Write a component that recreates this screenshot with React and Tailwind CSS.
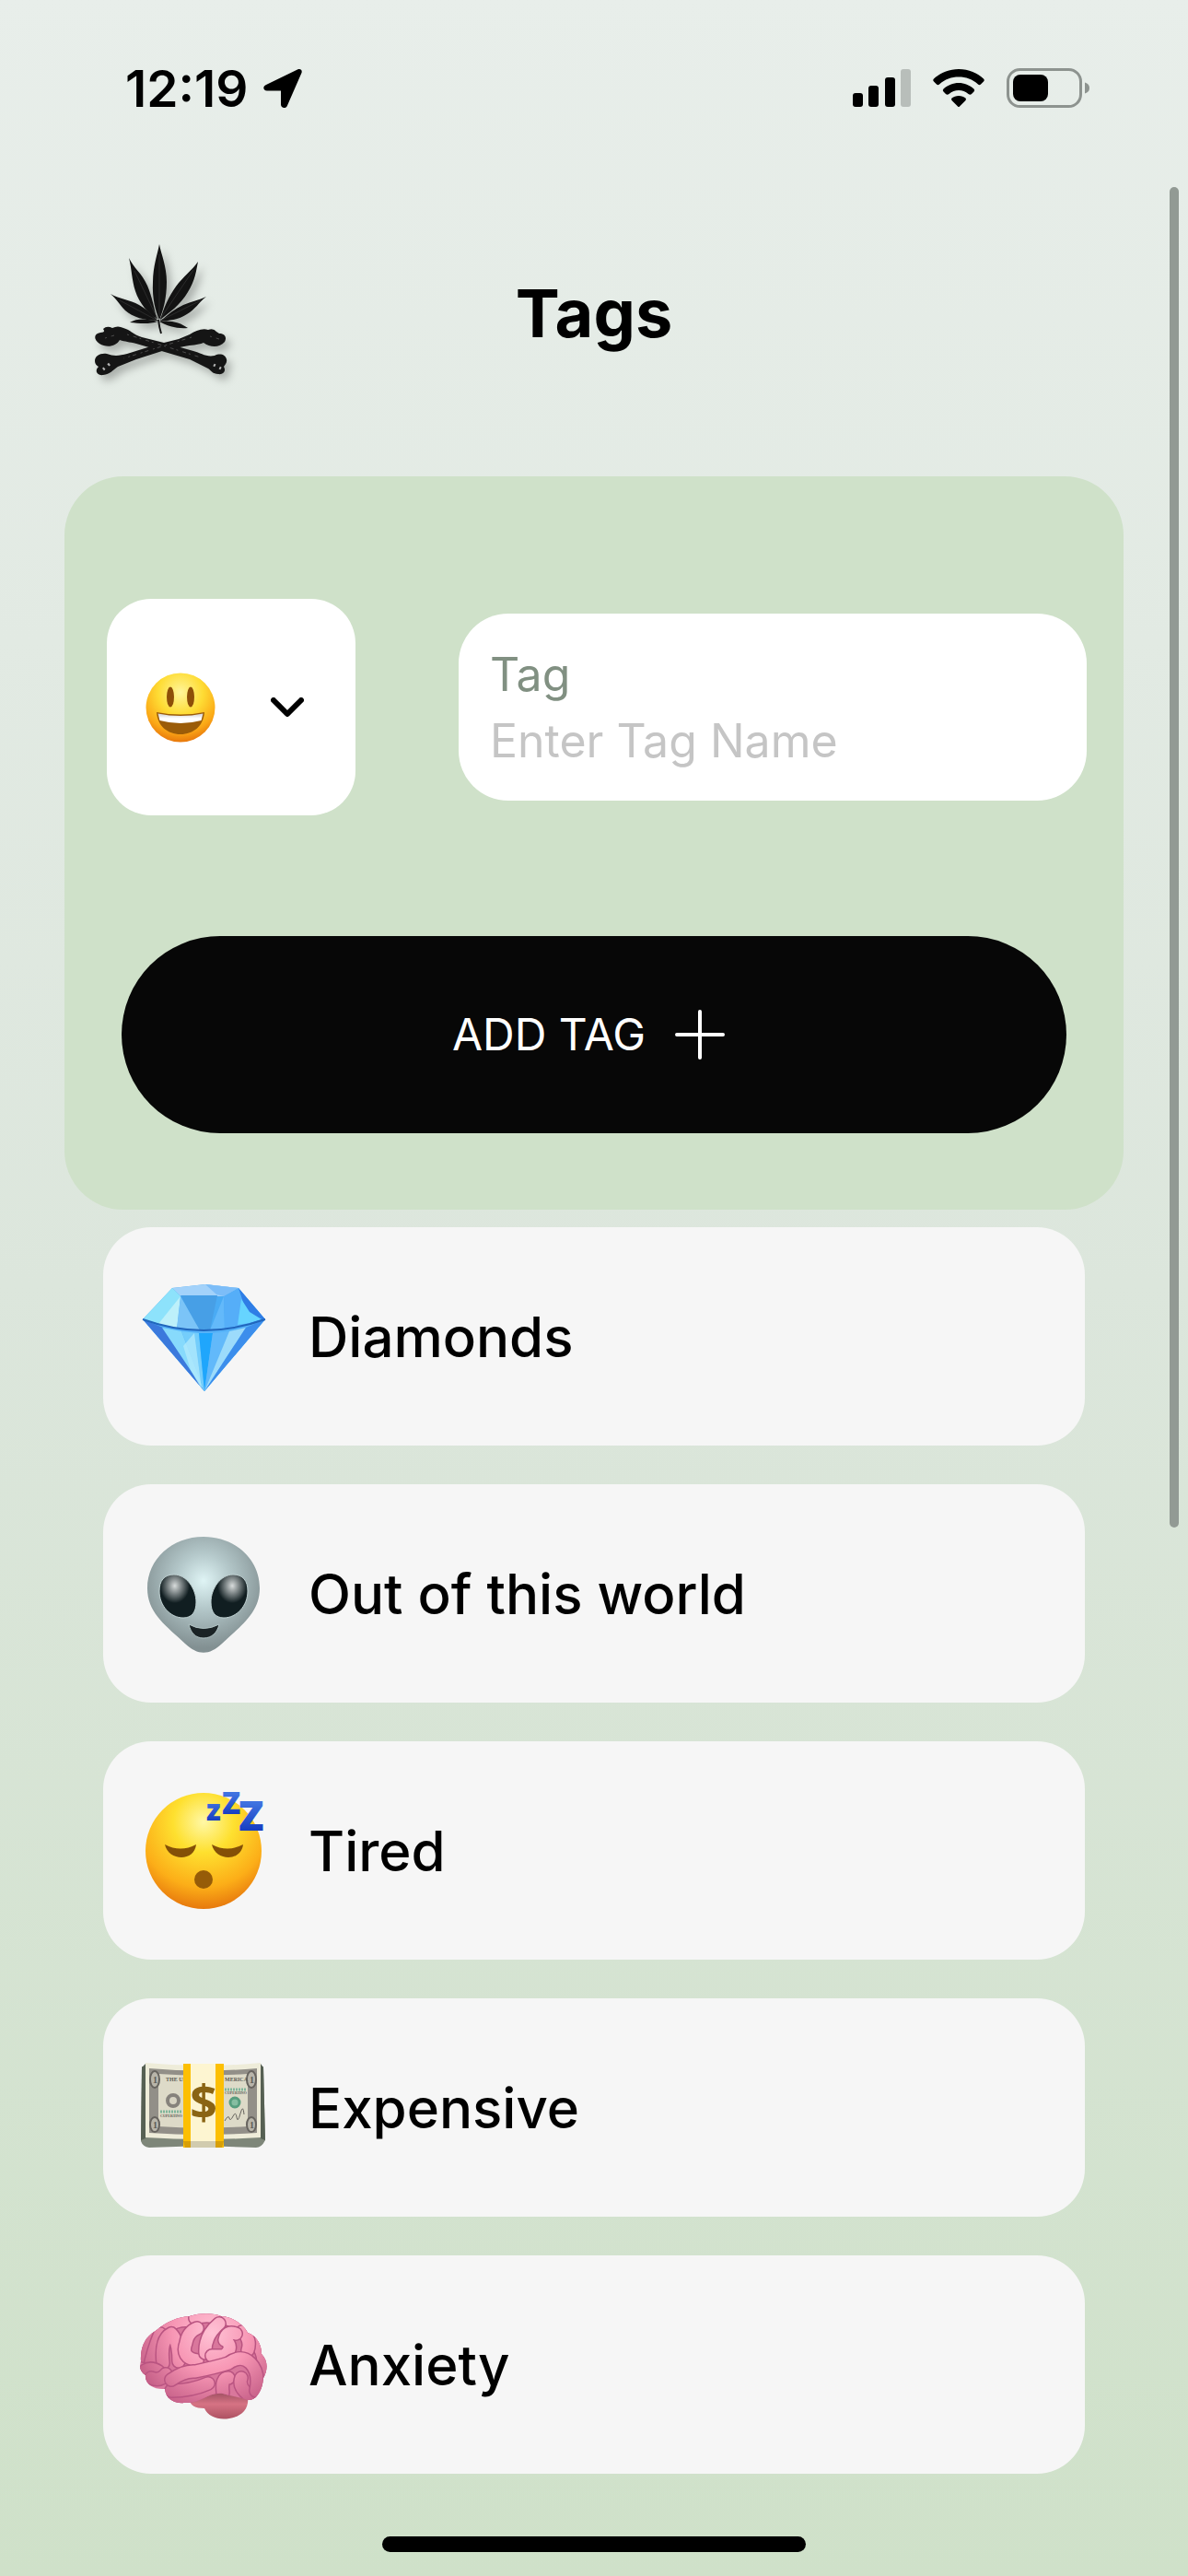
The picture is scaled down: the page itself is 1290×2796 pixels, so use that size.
import { useState } from 'react';

const TAGS = [
  { name: 'Diamonds', Icon: DiamondIcon },
  { name: 'Out of this world', Icon: AlienIcon },
  { name: 'Tired', Icon: SleepyIcon },
  { name: 'Expensive', Icon: MoneyIcon },
  { name: 'Anxiety', Icon: BrainIcon },
];

// folds of the brain, drawn back to front
const BRAIN_FOLDS = [
  'M30 28Q45 20 56 22',
  'M62 19Q76 14 90 20',
  'M97 20Q112 24 121 36',
  'M6 60Q6 46 14 36',
  'M14 66Q18 50 24 36',
  'M128 46Q140 60 134 78',
  'M113 34Q123 42 119 54',
  'M27 68Q24 42 36 36 44 44 44 66',
  'M64 65Q46 62 52 46 54 34 64 30',
  'M73 57Q72 38 88 25',
  'M80 60H93Q104 52 96 44M94 43Q96 32 106 36',
  'M8 76Q14 72 22 77',
  'M14 84Q24 88 30 80',
  'M37 106Q62 108 80 96',
  'M36 98Q58 98 76 90',
  'M92 100Q90 84 98 84',
  'M122 104Q108 94 112 84',
  'M36 86Q50 76 62 77 86 72 98 68 112 58 122 68 132 78 128 98',
];

function StatusBar() {
  return (
    <div className="flex h-48 items-center justify-between pl-[136px] pr-[106px]">
      <div className="flex items-center gap-4">
        <span className="text-[55px] leading-[60px] font-semibold">12:19</span>
        <svg className="h-[44px] w-[42px]" viewBox="0 0 42 44" aria-hidden="true">
          <path d="M3 18 37 1.500C40 0 42.500 2 41.500 5L26 40.500C24.500 44.500 19 43.500 19 39.500V24.500H4C-.5 24-1 20 3 18Z" />
        </svg>
      </div>
      <div className="flex items-center gap-6">
        <svg className="h-[42px] w-[63px]" viewBox="0 0 63 42" aria-hidden="true">
          <rect y="26" width="11" height="15" rx="3" />
          <rect x="17" y="18" width="11" height="23" rx="3" />
          <rect x="35" y="9" width="11" height="32" rx="3" />
          <rect x="52" width="11" height="41" rx="3" fill="#b8beba" />
        </svg>
        <svg className="h-[42px] w-[56px]" viewBox="0 0 56 42" aria-hidden="true">
          <path d="M28 0C39 0 48.500 4.500 55 10.500Q56.500 12 55 13.500L52 16.500Q50.500 18 49 16.500C43 11 36 8.500 28 8.500S13 11 7 16.500Q5.500 18 4 16.500L1 13.500Q-.5 12 1 10.500C7.500 4.500 17 0 28 0Z" />
          <path d="M28 15C34 15 40 17.500 44.500 21.500Q46 23 44.500 24.500L42 27Q40.500 28.500 38.500 27C35.500 24.500 32 23 28 23S20.500 24.500 17.500 27Q15.500 28.500 14 27L11.500 24.500Q10 23 11.500 21.500C16 17.500 22 15 28 15Z" />
          <path d="M28 29C31 29 33.500 30 35.500 31.500Q36.500 32.500 35.500 34L29 40.500Q28 41.500 27 40.500L20.500 34Q19.500 32.500 20.500 31.500C22.500 30 25 29 28 29Z" />
        </svg>
        <svg className="h-[44px] w-[91px]" viewBox="0 0 91 44" aria-hidden="true">
          <rect x="1.500" y="1.500" width="79" height="40" rx="13" fill="none" stroke="#8d938f" strokeWidth="3" />
          <rect x="7" y="7" width="38" height="29" rx="8" />
          <path d="M85 15.500Q90 17 90 21.500T85 27.500Z" fill="#8d938f" />
        </svg>
      </div>
    </div>
  );
}

function Logo() {
  return (
    <svg className="h-[150px] w-[150px] drop-shadow-[5px_6px_4px_rgba(0,0,0,0.25)]" viewBox="0 0 150 150" aria-hidden="true">
      <g fill="#131313">
        <path d="M71 1C73 12 79 25 79 42 79 60 75 74 71 83 67 74 63 60 64 42 64 25 69 12 71 1Z" />
        <path d="M38 16C43 27 52 32 58 46 63 58 66 72 68 82 59 76 49 65 45 52 41 40 41 27 38 16Z" />
        <path d="M113 20C111 30 110 40 102 53 94 67 81 76 72 83 76 70 81 58 89 47 97 36 107 29 113 20Z" />
        <path d="M18 55C28 61 39 61 49 67 58 72 64 78 69 84 55 84 42 80 34 73 28 67 25 61 18 55Z" />
        <path d="M122 58C114 64 110 72 101 77 92 83 81 84 72 85 80 77 88 71 97 67 106 63 114 62 122 58Z" />
        <path d="M39 86C47 81 58 82 69 85 61 88 49 87 39 86ZM71 85C83 83 94 86 102 92 90 93 80 90 71 85Z" />
      </g>
      <path d="M71 12V80M44 30 69 82M108 29 72 82M28 62 69 84M116 62 72 84" stroke="#2b2b2b" fill="none" />
      <path d="M70 83Q71 92 73 98" stroke="#161616" strokeWidth="2" fill="none" />
      <g fill="#151515">
        <path d="M10 93Q14 89 20 92 26 89 32 92C40 94 42 99 52 102L76 108 108 117C116 119 122 124 131 122 137 119 143 121 144 126 145 130 142 132 141 134 144 139 140 143 135 142 129 142 127 138 124 136L104 126 70 116 46 109C38 107 34 107 28 105 24 112 14 114 6 109 -1 104 0 98 7 97 11 97 12 96 10 93Z" />
        <path d="M133 96Q130 92 124 94C118 92 110 95 104 99L92 104 68 110 36 120C28 122 22 123 14 120 7 119 1 122 1 128 1 131 3 133 5 134 0 139 4 144 10 143 18 142 20 138 26 134L46 126 74 117 98 112C106 110 112 111 119 108 126 113 136 114 142 107 145 101 141 98 136 98Z" />
      </g>
      <g stroke="#4c4c4c" strokeDasharray="2 5 4 3" fill="none">
        <path d="M36 99 62 107 116 124M106 102 80 110 32 125M12 103 22 100M126 101 136 104" />
        <path d="M10 137 17 131M130 132 138 136" stroke="#b5b5b5" strokeWidth="3" />
      </g>
    </svg>
  );
}

function SmileyIcon({ className }) {
  return (
    <svg className={className} viewBox="0 0 76 76" role="img" aria-label="Smiley">
      <defs>
        <radialGradient id="smiley" cx="50%" cy="28%" r="72%">
          <stop offset="0" stopColor="#fff59a" />
          <stop offset=".45" stopColor="#fedc34" />
          <stop offset=".8" stopColor="#fba816" />
          <stop offset="1" stopColor="#e8780c" />
        </radialGradient>
        <linearGradient id="teeth" x2="0" y2="1">
          <stop offset="0" stopColor="#cfcfd4" />
          <stop offset=".5" stopColor="#fff" />
        </linearGradient>
      </defs>
      <circle cx="38" cy="38" r="37.500" fill="url(#smiley)" />
      <ellipse cx="27" cy="26.500" rx="4" ry="11" fill="#8e4f08" />
      <ellipse cx="49" cy="26.500" rx="4" ry="11" fill="#8e4f08" />
      <path d="M12 43Q38 48 64 43C63 58 52 67 38 67S13 58 12 43Z" fill="#9b5c08" />
      <path d="M13.500 44.500Q38 49.500 62.500 44.500L60.500 52Q38 58 15.500 52Z" fill="url(#teeth)" />
    </svg>
  );
}

function DiamondIcon({ className }) {
  return (
    <svg className={className} viewBox="0 0 140 140" aria-hidden="true">
      <path d="M5 51 37 17 73 13 109 17 138 51 72 129Z" fill="#4aabf4" />
      <path d="M37 17 73 13 109 17 93 26H46Z" fill="#a3d2fa" />
      <path d="M73 13 109 17 93 26 85 24Z" fill="#7cbdf8" />
      <path d="M37 17 46 26 42 61 5 51Z" fill="#8de2fb" />
      <path d="M46 26 42 61 22 56Z" fill="#bdf0fa" />
      <path d="M46 25H86L78 63H66Z" fill="#479fe6" />
      <path d="M46 26 42 61 67 63Z" fill="#7bc4f7" />
      <path d="M93 26 78 63 94 63Z" fill="#63b9fa" />
      <path d="M109 17 93 26 94 63 122 57Z" fill="#55aef8" />
      <path d="M109 17 122 57 138 51Z" fill="#2f7de6" />
      <path d="M112 29 121 43 134 51 121 55 108 57Z" fill="#66d4ff" />
      <path d="M5 51Q71 76 138 51L72 129Z" fill="#55b2f8" />
      <path d="M5 51 27 60 72 129Z" fill="#3b79dc" />
      <path d="M26 60 47 64 72 129Z" fill="#87dafc" />
      <path d="M47 64 66 66 72 129Z" fill="#74cdfb" />
      <path d="M66 66H81L72 129Z" fill="#1fa6fc" />
      <path d="M99 64 81 66 72 129Z" fill="#62b9fa" />
      <path d="M99 64 117 60 72 129Z" fill="#9cdbfb" />
      <path d="M138 51 117 60 72 129Z" fill="#3c8eec" />
      <path d="M61 66 69 127 57 106 49 80Z" fill="#b8ecfc" opacity=".7" />
      <path d="M5 51Q71 75 138 51" fill="none" stroke="#2166bd" strokeWidth="2" />
    </svg>
  );
}

function AlienIcon({ className }) {
  return (
    <svg className={className} viewBox="0 0 140 140" aria-hidden="true">
      <defs>
        <radialGradient id="alien" cx="50%" cy="38%" r="58%">
          <stop offset="0" stopColor="#dff4f5" />
          <stop offset=".4" stopColor="#b5c9cb" />
          <stop offset="1" stopColor="#829092" />
        </radialGradient>
        <radialGradient id="alienEyeLeft" cx="42%" cy="26%" r="40%">
          <stop offset="0" stopColor="#d8dcdc" />
          <stop offset="1" stopColor="#111e21" />
        </radialGradient>
        <radialGradient id="alienEyeRight" cx="58%" cy="26%" r="40%">
          <stop offset="0" stopColor="#d8dcdc" />
          <stop offset="1" stopColor="#111e21" />
        </radialGradient>
      </defs>
      <path d="M71 8C105 8 132 32 132 64 132 91 111 105 91 124 77 137 65 137 51 124 31 105 10 91 10 64 10 32 37 8 71 8Z" fill="url(#alien)" />
      <path d="M39 49C52 49 63 64 63 79 63 90 58 96 49 96 35 96 23 83 23 67 23 56 28 49 39 49Z" fill="url(#alienEyeLeft)" stroke="#c1d2d3" />
      <path d="M103 49C90 49 79 64 79 79 79 90 84 96 93 96 107 96 119 83 119 67 119 56 114 49 103 49Z" fill="url(#alienEyeRight)" stroke="#c1d2d3" />
      <path d="M55 103Q71 112 88 103C86 112 80 118 71 118S57 112 55 103Z" fill="#1b2325" stroke="#b0c2c3" />
    </svg>
  );
}

function SleepyIcon({ className }) {
  return (
    <svg className={className} viewBox="0 0 140 140" overflow="visible" aria-hidden="true">
      <defs>
        <radialGradient id="sleepy" cx="50%" cy="25%" r="75%">
          <stop offset="0" stopColor="#fff8a6" />
          <stop offset=".35" stopColor="#fee02f" />
          <stop offset=".75" stopColor="#fcae18" />
          <stop offset="1" stopColor="#e7790d" />
        </radialGradient>
        <linearGradient id="zed" x2="0" y2="1">
          <stop offset=".3" stopColor="#3f72e0" />
          <stop offset="1" stopColor="#0526b3" />
        </linearGradient>
      </defs>
      <circle cx="71" cy="70" r="63" fill="url(#sleepy)" />
      <g fill="#845007">
        <path d="M29 63Q46 72 63 63C62 72 55 77 47 77S31 72 29 63Z" />
        <path d="M80 63Q97 72 114 63C113 72 106 77 98 77S82 72 80 63Z" />
        <circle cx="71" cy="101" r="10" fill="#965c08" />
      </g>
      <g fill="url(#zed)" className="font-['Open_Sans',sans-serif] font-extrabold">
        <text x="74" y="37" fontSize="31">z</text>
        <text x="91" y="30" fontSize="33">Z</text>
        <text x="109" y="48" fontSize="45">Z</text>
      </g>
    </svg>
  );
}

function MoneyIcon({ className }) {
  return (
    <svg className={className} viewBox="0 0 140 140" aria-hidden="true">
      <path d="M4 25H136L138 105Q134 113 128 113L70 111 12 113Q5 112 3 106Z" fill="#7e8679" />
      <path d="M4 26 8 22V103L3 105Z" fill="#566053" />
      <path d="M136 26 133 22V103L138 105Z" fill="#566053" />
      <path d="M8 21Q70 27 133 21V102Q70 106 8 102Z" fill="#eeecd9" />
      <path d="M12 27Q70 32 129 27V97Q70 101 12 97Z" fill="#928f88" />
      <path d="M22 33Q70 36 119 33V90Q70 93 22 90Z" fill="#dddac8" />
      <g fill="#b8b5aa" stroke="#66635e" strokeWidth="2">
        <ellipse cx="18" cy="39" rx="5" ry="9" />
        <ellipse cx="18" cy="88" rx="5" ry="8" />
        <ellipse cx="123" cy="39" rx="5" ry="9" />
        <ellipse cx="123" cy="88" rx="5" ry="8" />
      </g>
      <g className="font-['Liberation_Serif',serif] font-bold" fill="#5c5a54">
        <text x="16" y="43" fontSize="10">1</text>
        <text x="16" y="92" fontSize="10">1</text>
        <text x="121" y="43" fontSize="10">1</text>
        <text x="121" y="92" fontSize="10">1</text>
        <text x="30" y="41" fontSize="6">THE UN</text>
        <text x="94" y="41" fontSize="6">MERICA</text>
        <text x="24" y="80" fontSize="4">CUPERTINO</text>
        <text x="94" y="55" fontSize="4">CUPERTINO</text>
      </g>
      <path d="M24 74H47M94 50H117" stroke="#7fb59a" strokeWidth="3" strokeDasharray="2 1" />
      <circle cx="38" cy="62" r="6" fill="#d7d3c3" stroke="#86827c" strokeWidth="4" />
      <circle cx="105" cy="64" r="5" fill="#86bda1" stroke="#579d7e" strokeWidth="3" />
      <path d="M94 84q4-7 5-3t4-2 4 1 4-4 4 1" fill="none" stroke="#67645e" />
      <path d="M49 22H93V113H49Z" fill="#fcbf04" />
      <path d="M57 22H84V113H57Z" fill="#fdf5d1" />
      <path d="M49 106H57V113H51ZM84 106H93L91 113H84Z" fill="#d79f07" />
      <path d="M57 106H84V113H57Z" fill="#d1cbae" />
      <text x="71" y="83" fontSize="52" textAnchor="middle" fill="#8a6414" className="font-['Open_Sans',sans-serif] font-bold">$</text>
    </svg>
  );
}

function BrainIcon({ className }) {
  return (
    <svg className={className} viewBox="0 0 140 140" aria-hidden="true">
      <defs>
        <radialGradient id="brain" gradientUnits="userSpaceOnUse" cx="80" cy="35" r="95">
          <stop offset="0" stopColor="#ffc2d5" />
          <stop offset=".45" stopColor="#f796b4" />
          <stop offset="1" stopColor="#bd5680" />
        </radialGradient>
        <linearGradient id="stem" x2="0" y2="1">
          <stop offset="0" stopColor="#8f4658" />
          <stop offset=".5" stopColor="#d67384" />
          <stop offset="1" stopColor="#ad5262" />
        </linearGradient>
        <clipPath id="brainShape">
          <path d="M3 66C2 50 8 39 19 33 30 23 43 18 56 17 69 13 83 14 90 17 103 18 113 25 119 35 130 39 134 49 134 58 142 66 140 77 136 84 135 98 128 109 119 108 111 105 102 104 92 101 76 99 68 112 51 111 39 112 30 107 29 96 18 97 7 91 8 81 2 77 1 72 3 66Z" />
        </clipPath>
      </defs>
      <path d="M56 108Q57 117 72 117C76 126 87 130 99 128 112 126 121 118 119 104L84 96Z" fill="url(#stem)" />
      <g clipPath="url(#brainShape)" fill="none" strokeLinecap="round" strokeLinejoin="round">
        <rect width="140" height="140" fill="#d9779c" />
        {BRAIN_FOLDS.map((d) => (
          <g key={d}>
            <path d={d} stroke="#b95481" strokeWidth="16" />
            <path d={d} stroke="url(#brain)" strokeWidth="13" />
          </g>
        ))}
      </g>
    </svg>
  );
}

function TagForm() {
  const [name, setName] = useState('');

  return (
    <form
      className="rounded-[64px] bg-[#cfe1c9] pt-[133px] pr-10 pb-[83px] pl-[46px]"
      onSubmit={(e) => e.preventDefault()}
    >
      <div className="flex items-center justify-between gap-28">
        <button
          type="button"
          aria-label="Choose emoji"
          className="flex h-[235px] w-[270px] shrink-0 items-center gap-[60px] rounded-[48px] bg-white pl-[42px]"
        >
          <SmileyIcon className="h-[76px] w-[76px]" />
          <svg className="h-[22px] w-[36px]" viewBox="0 0 36 22" aria-hidden="true">
            <path d="M3 3 18 18 33 3" fill="none" stroke="#000" strokeWidth="6" strokeLinecap="round" strokeLinejoin="round" />
          </svg>
        </button>
        <div className="flex h-[203px] min-w-0 flex-1 flex-col justify-center rounded-[54px] bg-white px-[34px]">
          <label htmlFor="tag-name" className="text-[50px] leading-[72px] text-[#819082]">Tag</label>
          <input
            id="tag-name"
            value={name}
            onChange={(e) => setName(e.target.value)}
            placeholder="Enter Tag Name"
            className="h-[72px] w-full bg-transparent text-[50px] leading-[72px] outline-none placeholder:text-[#c5c5c5]"
          />
        </div>
      </div>
      <div className="mt-[131px] pr-[22px] pl-4">
        <button
          type="submit"
          className="flex h-[214px] w-full items-center justify-center gap-8 rounded-full bg-[#070707] pr-3 text-[48px] text-white"
        >
          ADD TAG
          <svg className="h-[54px] w-[54px]" viewBox="0 0 54 54" aria-hidden="true">
            <path d="M27 2V52M2 27H52" stroke="#fff" strokeWidth="4" strokeLinecap="round" />
          </svg>
        </button>
      </div>
    </form>
  );
}

function TagRow({ name, Icon }) {
  return (
    <li className="flex h-[237px] items-center gap-[45px] rounded-[52px] bg-[#f6f6f6] pl-[38px]">
      <Icon className="h-[140px] w-[140px] shrink-0" />
      <span className="text-[60px] leading-[72px] font-medium">{name}</span>
    </li>
  );
}

export default function App() {
  return (
    <div className="relative min-h-screen bg-linear-to-b from-[#e8eeea] via-[#dce6dc] to-[#cfe1c9] font-[Inter,sans-serif] text-black">
      <StatusBar />
      <header className="grid h-[325px] grid-cols-3 items-start px-[102px] pt-[72px]">
        <Logo />
        <h1 className="pt-8 text-center text-[72px] leading-[88px] font-bold">Tags</h1>
      </header>
      <main className="px-[70px]">
        <TagForm />
        <ul className="mt-[19px] flex flex-col gap-[42px] px-[42px]">
          {TAGS.map((tag) => (
            <TagRow key={tag.name} {...tag} />
          ))}
        </ul>
      </main>
      <div className="flex justify-center pt-[68px] pb-6">
        <div className="h-[17px] w-[460px] rounded-full bg-black" />
      </div>
      {/* scroll indicator */}
      <div className="absolute top-[203px] right-[10px] h-[1455px] w-[10px] rounded-full bg-[#929a94]" />
    </div>
  );
}
